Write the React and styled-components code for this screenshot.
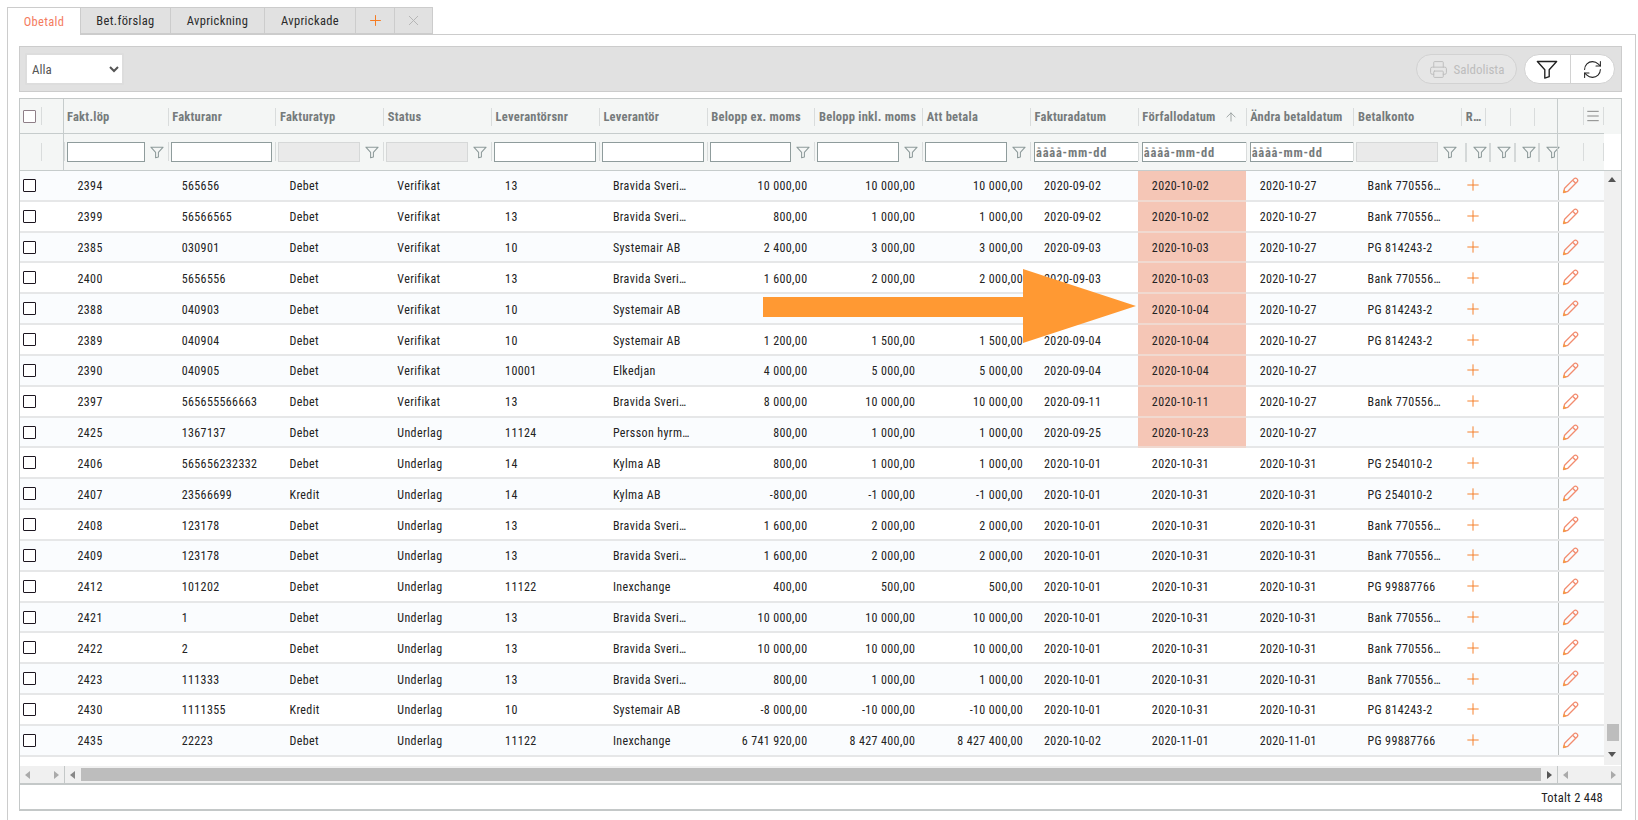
import React from 'react';
import styled, { createGlobalStyle } from 'styled-components';
import { Plus, X, Printer, RefreshCw, ArrowUp, Menu } from 'lucide-react';

const COLS = '43.5px 104.2px repeat(12, 107.8px) 24.2px 24.2px 24.2px 23px 47.5px';

const Global = createGlobalStyle`
  html, body { margin: 0; padding: 0; background: #fff; }
  body { font-family: Roboto, "Liberation Sans", sans-serif; font-size: 12px; color: #222; font-stretch: 75%; }
  * { box-sizing: border-box; }
`;

const Page = styled.div`
  width: 1638px; height: 820px; padding: 7px 2px 0 7px; overflow: hidden; position: relative;
  display: flex; flex-direction: column;
`;
const TabBar = styled.div`display: flex; height: 28px; position: relative; z-index: 1;`;
const Tab = styled.div`
  width: ${p => p.$w}px; height: ${p => (p.$active ? 28 : 27)}px; display: flex; align-items: center; justify-content: center;
  background: ${p => (p.$active ? '#fff' : '#e1e1e1')};
  color: ${p => (p.$active ? '#f47c5f' : '#2a2a2a')};
  border: 1px solid #ccc; border-left: ${p => (p.$first ? '1px solid #ccc' : 'none')};
  border-bottom: ${p => (p.$active ? 'none' : '1px solid #ccc')};
  font-size: 12.5px; letter-spacing: .35px;
`;
const Panel = styled.div`
  flex: 1; margin-top: -1px; border: 1px solid #ccc; border-bottom: none;
  padding: 11px 13px 0 11px; display: flex; flex-direction: column;
`;
const Toolbar = styled.div`
  height: 46px; flex: none; background: #e1e1e1; border: 1px solid #ccc; display: flex; align-items: center;
  padding: 0 6px 0 5px; justify-content: space-between; margin-bottom: 6px;
`;
const Select = styled.select`
  width: 99px; height: 32px; background: #fff; border: 2px solid #ddd; font: inherit; font-weight: 400; font-size: 13px; color: #555; padding-left: 1px; border-radius: 1px; outline: none;
`;
const ToolRight = styled.div`display: flex; align-items: center; gap: 7px;`;
const Saldo = styled.div`
  width: 101px; height: 30px; border: 1px solid #d2d2d2; border-radius: 15px; display: flex; align-items: center; justify-content: center; gap: 6px;
  color: #bdbdbd; font-size: 13px; background: #e6e6e6;
`;
const Pills = styled.div`
  width: 91px; height: 30px; border: 1px solid #d2d2d2; border-radius: 15px; background: #fff; display: grid; grid-template-columns: 1fr 1fr; overflow: hidden;
`;
const Pill = styled.div`
  display: flex; align-items: center; justify-content: center; color: #222;
  & + & { border-left: 1px solid #d2d2d2; }
`;
const Grid = styled.div`
  width: 1603px; height: 713px; flex: none; border: 1px solid #c4c8c8; border-bottom-width: 2px; position: relative;
  display: flex; flex-direction: column; background: #fff;
`;
const HeadRow = styled.div`
  display: grid; grid-template-columns: ${COLS}; height: 35px; flex: none; background: #f4f6f5; align-items: stretch;
  border-bottom: 1px solid #c6cccc; margin-right: 17px; position: relative;
`;
const FilterRow = styled(HeadRow)`height: 36px; border-bottom: none; overflow: hidden;`;
const HeadFill = styled.div`position: absolute; left: 100%; top: 0; bottom: -1px; width: 17px; background: #f4f6f5;`;
const CheckHead = styled.div`
  display: flex; align-items: center; border-right: 1px solid #c6cccc; padding-left: 3px;
`;
const Box = styled.span`
  display: block; width: 13px; height: 13px; border: 1px solid ${p => p.$head ? '#8f7f88' : '#1d1620'}; border-radius: 1px; background: #fff; flex: none;
`;
const ShortSep = styled.span`
  display: block; width: 1px; height: 18px; background: #d9dcdc; flex: none; margin-left: ${p => p.$m ?? 0}px;
`;
const HeadCell = styled.div`display: flex; align-items: center; min-width: 0; padding-top: 1px;`;
const HeadLabel = styled.div`
  height: 18px; line-height: 18px; padding-left: 3.5px; font-weight: 700; color: #767b7c; font-size: 12.5px; white-space: nowrap; letter-spacing: .24px;
  display: flex; align-items: center;
`;
const SepHead = styled(HeadLabel)`border-left: ${p => p.$noSep ? 'none' : '1px solid #d9dcdc'}; width: 100%;`;
const SortMark = styled.span`margin-left: 8px; display: flex; color: #959b9b;`;
const FrozenHead = styled.div`
  display: flex; align-items: center; border-left: 1px solid #c6cccc; padding-left: 25px; color: #777;
`;
const MenuWrap = styled.span`display: flex; width: 21px; height: 18px; align-items: center; justify-content: center; border-left: 1px solid #d9dcdc; border-right: 1px solid #d9dcdc;`;
const FilterCell = styled.div`display: flex; align-items: center; padding: 0 ${p => p.$date ? 0 : p.$full ? 3 : 4}px 0 ${p => p.$date ? 4 : 3}px; position: relative; min-width: 0;
  &::before { content: ''; position: absolute; left: 0; top: 8px; height: 19px; width: 1px; background: #d9dcdc; }
`;
const FilterInput = styled.input`
  flex: 1; min-width: 0; height: 20px; background: #fff; border: 1px solid #8f9c9c; padding: 0 2px; outline: none; font: inherit;
`;
const DisabledInput = styled(FilterInput)`background: #eaeaea; border-color: #d6d8d8;`;
const DateInput = styled(FilterInput)`
  border-right: none; font-weight: 700; font-size: 12.5px; letter-spacing: .75px; padding: 0 0 0 1px;
  &::placeholder { color: #767b7c; opacity: 1; }
`;
const FunnelWrap = styled.span`flex: none; display: flex; margin-left: ${p => p.$m ?? 5}px;`;
const NarrowFilter = styled.div`display: flex; align-items: center; padding-left: 4px; overflow: visible; min-width: 0;`;
const ThickSep = styled.span`display: block; width: 2px; height: 19px; background: #d4d8d8; flex: none;`;
const Body = styled.div`
  height: 595px; flex: none; display: flex; border-top: 1px solid #c6cccc; overflow: hidden;
`;
const Rows = styled.div`width: 1584px; flex: none; position: relative;`;
const DataRow = styled.div`
  display: grid; grid-template-columns: ${COLS}; height: 30.83px; align-items: stretch; background: ${p => p.$odd ? '#fafcfe' : '#fff'};
  border-bottom: 2px solid #e6e7e8;
`;
const Cell = styled.div`
  display: flex; align-items: center; padding: ${p => p.$right ? '2px 7px 0 0' : '2px 0 0 14px'}; justify-content: ${p => p.$right ? 'flex-end' : 'flex-start'};
  background: ${p => p.$hl ? '#f5c6b6' : 'transparent'}; white-space: nowrap; min-width: 0; letter-spacing: .38px; margin-bottom: ${p => p.$hl ? '-2px' : 0};
  border-bottom: ${p => p.$hl ? '2px solid #f0d9d0' : 'none'};
`;
const CheckCell = styled.div`display: flex; align-items: center; padding-left: 3px;`;
const PlusCell = styled.div`display: flex; align-items: center; justify-content: center; color: #f57a20;`;
const Spacer = styled.div`grid-column: span 3;`;
const EditCell = styled.div`display: flex; align-items: center; border-left: 1px solid #bcc0c0; margin-left: 1.5px; padding-left: 3px;`;
const VScroll = styled.div`width: 17px; flex: none; background: #f0f0f0; height: 100%; position: relative; margin-bottom: 0; border-left: 1px solid #f0f0f0;`;
const Thumb = styled.div`position: absolute; left: 2px; right: 2px; top: 553px; height: 17px; background: #bdbdbd;`;
const TriUp = styled.span`position: absolute; left: 3px; top: ${p => p.$t}px; width: 0; height: 0; border-left: 4.5px solid transparent; border-right: 4.5px solid transparent; ${p => p.$down ? 'border-top: 5px solid #555;' : 'border-bottom: 5px solid #555;'}`;
const HScrollRow = styled.div`
  margin-top: 1px; height: 17px; flex: none; display: grid; grid-template-columns: 43.5px 1493px 1fr; background: #f0f0f0; border-bottom: none;
`;
const HSec = styled.div`
  display: flex; align-items: center; justify-content: space-between; padding: 0 5px; min-width: 0;
  & + & { border-left: 1px solid #c4c8c8; }
`;
const Arrow = styled.span`display: block; width: 0; height: 0; border-top: 4.5px solid transparent; border-bottom: 4.5px solid transparent; flex: none;
  ${p => p.$dir === 'l' ? `border-right: 5px solid ${p.$c};` : `border-left: 5px solid ${p.$c};`}
`;
const HThumb = styled.div`flex: 1; height: 13px; background: #bdbdbd; margin: 0 6px;`;
const Footer = styled.div`
  flex: 1; border-top: 2px solid #c4c8c8; display: flex; align-items: center; justify-content: flex-end; padding: 1px 18px 0 0; letter-spacing: .25px; font-size: 12.5px;
`;
const BigArrow = styled.svg`position: absolute; left: 763px; top: 269px; pointer-events: none; z-index: 3;`;

const Funnel = ({ size = 14, color = '#8d9a9a', sw = 1.2 }) => (
  <svg width={size} height={size} viewBox="0 0 16 16" fill="none" stroke={color} strokeWidth={sw} strokeLinejoin="round">
    <path d="M1 2.5H15L9.6 8.5V13.6L6.4 14.6V8.5Z" />
  </svg>
);

const EditPencil = () => (
  <svg width="17" height="17" viewBox="0 0 17 17" fill="none" stroke="#f28c6f" strokeWidth="1.3" strokeLinejoin="round">
    <path d="M1.5 15.5L2.6 11.2L11.9 1.9C12.8 1 14.1 1 15 1.9C15.9 2.8 15.9 4.1 15 5L5.8 14.3Z" />
    <path d="M10.6 3.2L13.7 6.3" />
    <path d="M1.5 15.5L2.1 13L4 14.9Z" fill="#f5a03c" stroke="#f5a03c" strokeWidth=".6" />
  </svg>
);

const B = 'Bravida Sveri…';
const V = 'Verifikat', U = 'Underlag', D = 'Debet', K = 'Kredit';
const BK = 'Bank 770556…';
const data = [
  ['2394','565656',D,V,'13',B,'10 000,00','10 000,00','10 000,00','2020-09-02','2020-10-02','2020-10-27',BK],
  ['2399','56566565',D,V,'13',B,'800,00','1 000,00','1 000,00','2020-09-02','2020-10-02','2020-10-27',BK],
  ['2385','030901',D,V,'10','Systemair AB','2 400,00','3 000,00','3 000,00','2020-09-03','2020-10-03','2020-10-27','PG 814243-2'],
  ['2400','5656556',D,V,'13',B,'1 600,00','2 000,00','2 000,00','2020-09-03','2020-10-03','2020-10-27',BK],
  ['2388','040903',D,V,'10','Systemair AB','800,00','1 000,00','1 000,00','2020-09-04','2020-10-04','2020-10-27','PG 814243-2'],
  ['2389','040904',D,V,'10','Systemair AB','1 200,00','1 500,00','1 500,00','2020-09-04','2020-10-04','2020-10-27','PG 814243-2'],
  ['2390','040905',D,V,'10001','Elkedjan','4 000,00','5 000,00','5 000,00','2020-09-04','2020-10-04','2020-10-27',''],
  ['2397','565655566663',D,V,'13',B,'8 000,00','10 000,00','10 000,00','2020-09-11','2020-10-11','2020-10-27',BK],
  ['2425','1367137',D,U,'11124','Persson hyrm…','800,00','1 000,00','1 000,00','2020-09-25','2020-10-23','2020-10-27',''],
  ['2406','565656232332',D,U,'14','Kylma AB','800,00','1 000,00','1 000,00','2020-10-01','2020-10-31','2020-10-31','PG 254010-2'],
  ['2407','23566699',K,U,'14','Kylma AB','-800,00','-1 000,00','-1 000,00','2020-10-01','2020-10-31','2020-10-31','PG 254010-2'],
  ['2408','123178',D,U,'13',B,'1 600,00','2 000,00','2 000,00','2020-10-01','2020-10-31','2020-10-31',BK],
  ['2409','123178',D,U,'13',B,'1 600,00','2 000,00','2 000,00','2020-10-01','2020-10-31','2020-10-31',BK],
  ['2412','101202',D,U,'11122','Inexchange','400,00','500,00','500,00','2020-10-01','2020-10-31','2020-10-31','PG 99887766'],
  ['2421','1',D,U,'13',B,'10 000,00','10 000,00','10 000,00','2020-10-01','2020-10-31','2020-10-31',BK],
  ['2422','2',D,U,'13',B,'10 000,00','10 000,00','10 000,00','2020-10-01','2020-10-31','2020-10-31',BK],
  ['2423','111333',D,U,'13',B,'800,00','1 000,00','1 000,00','2020-10-01','2020-10-31','2020-10-31',BK],
  ['2430','1111355',K,U,'10','Systemair AB','-8 000,00','-10 000,00','-10 000,00','2020-10-01','2020-10-31','2020-10-31','PG 814243-2'],
  ['2435','22223',D,U,'11122','Inexchange','6 741 920,00','8 427 400,00','8 427 400,00','2020-10-02','2020-11-01','2020-11-01','PG 99887766'],
];
const heads = ['Fakt.löp','Fakturanr','Fakturatyp','Status','Leverantörsnr','Leverantör','Belopp ex. moms','Belopp inkl. moms','Att betala','Fakturadatum','Förfallodatum','Ändra betaldatum','Betalkonto'];

export default function App() {
  return (
    <Page>
      <Global />
      <TabBar>
        <Tab $w={74} $active $first>Obetald</Tab>
        <Tab $w={90}>Bet.förslag</Tab>
        <Tab $w={94}>Avprickning</Tab>
        <Tab $w={91}>Avprickade</Tab>
        <Tab $w={39}><Plus size={17} color="#f57a20" strokeWidth={1.4} /></Tab>
        <Tab $w={38}><X size={17} color="#b5b5b5" strokeWidth={1.4} /></Tab>
      </TabBar>
      <Panel>
        <Toolbar>
          <Select defaultValue="Alla"><option>Alla</option></Select>
          <ToolRight>
            <Saldo><Printer size={19} strokeWidth={1.2} />Saldolista</Saldo>
            <Pills>
              <Pill><Funnel size={22} color="#222" sw={1} /></Pill>
              <Pill><RefreshCw size={21} strokeWidth={1.2} /></Pill>
            </Pills>
          </ToolRight>
        </Toolbar>
        <Grid>
          <HeadRow>
            <CheckHead><Box $head /><ShortSep $m={5} /></CheckHead>
            {heads.map((h, i) => (
              <HeadCell key={h}>
                <SepHead $noSep={i === 0}>
                  {h}
                  {h === 'Förfallodatum' && <SortMark><ArrowUp size={14} strokeWidth={1.5} /></SortMark>}
                </SepHead>
              </HeadCell>
            ))}
            <HeadCell><SepHead>R…</SepHead></HeadCell>
            <HeadCell><SepHead /></HeadCell>
            <HeadCell><SepHead /></HeadCell>
            <HeadCell><SepHead /></HeadCell>
            <FrozenHead><MenuWrap><Menu size={16} strokeWidth={1.3} /></MenuWrap></FrozenHead>
            <HeadFill />
          </HeadRow>
          <FilterRow>
            <CheckHead><ShortSep $m={18} /></CheckHead>
            <FilterCell><FilterInput /><FunnelWrap $m={5}><Funnel /></FunnelWrap></FilterCell>
            <FilterCell $full><FilterInput /></FilterCell>
            <FilterCell><DisabledInput disabled /><FunnelWrap><Funnel /></FunnelWrap></FilterCell>
            <FilterCell><DisabledInput disabled /><FunnelWrap><Funnel /></FunnelWrap></FilterCell>
            <FilterCell $full><FilterInput /></FilterCell>
            <FilterCell $full><FilterInput /></FilterCell>
            <FilterCell><FilterInput /><FunnelWrap><Funnel /></FunnelWrap></FilterCell>
            <FilterCell><FilterInput /><FunnelWrap><Funnel /></FunnelWrap></FilterCell>
            <FilterCell><FilterInput /><FunnelWrap><Funnel /></FunnelWrap></FilterCell>
            <FilterCell $date><DateInput placeholder="åååå-mm-dd" /></FilterCell>
            <FilterCell $date><DateInput placeholder="åååå-mm-dd" /></FilterCell>
            <FilterCell $date><DateInput placeholder="åååå-mm-dd" /></FilterCell>
            <FilterCell><DisabledInput disabled /><FunnelWrap><Funnel /></FunnelWrap></FilterCell>
            <NarrowFilter><ThickSep /><FunnelWrap $m={6}><Funnel /></FunnelWrap></NarrowFilter>
            <NarrowFilter><ThickSep /><FunnelWrap $m={6}><Funnel /></FunnelWrap></NarrowFilter>
            <NarrowFilter><ThickSep /><FunnelWrap $m={6}><Funnel /></FunnelWrap></NarrowFilter>
            <NarrowFilter><ThickSep /><FunnelWrap $m={6}><Funnel /></FunnelWrap></NarrowFilter>
            <FrozenHead><MenuWrap /></FrozenHead>
            <HeadFill />
          </FilterRow>
          <Body>
            <Rows>
              {data.map((r, i) => (
                <DataRow key={r[0]} $odd={i % 2 === 0}>
                  <CheckCell><Box /></CheckCell>
                  {r.map((v, j) => (
                    <Cell key={j} $right={j >= 6 && j <= 8} $hl={j === 10 && i < 9}>{v}</Cell>
                  ))}
                  <PlusCell><Plus size={18} strokeWidth={1.25} /></PlusCell>
                  <Spacer />
                  <EditCell><EditPencil /></EditCell>
                </DataRow>
              ))}
            </Rows>
            <VScroll>
              <TriUp $t={6} />
              <Thumb />
              <TriUp $t={581} $down />
            </VScroll>
          </Body>
          <HScrollRow>
            <HSec><Arrow $dir="l" $c="#aaa" /><Arrow $dir="r" $c="#aaa" /></HSec>
            <HSec><Arrow $dir="l" $c="#888" /><HThumb /><Arrow $dir="r" $c="#555" /></HSec>
            <HSec><Arrow $dir="l" $c="#aaa" /><Arrow $dir="r" $c="#aaa" /></HSec>
          </HScrollRow>
          <Footer>Totalt 2 448</Footer>
        </Grid>
      </Panel>
      <BigArrow width="374" height="75" viewBox="0 0 374 75">
        <path d="M0 28H260V0L373 37L260 74V48H0Z" fill="#ff9933" />
      </BigArrow>
    </Page>
  );
}
